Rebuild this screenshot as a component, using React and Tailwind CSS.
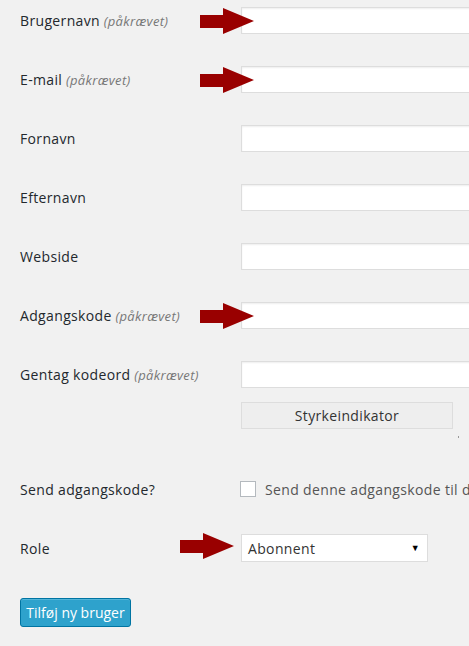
import React, { useState } from "react";

// Red pointer arrow drawn over the form
const Arrow = ({ className }) => (
  <svg
    className={className}
    width="54"
    height="26"
    viewBox="0 0 54 26"
    aria-hidden="true"
  >
    <path d="M0 7H23V0L54 13L23 26V20H0Z" fill="#990000" />
  </svg>
);

const Field = ({ label, required, arrow, type = "text" }) => (
  <div className="relative flex items-center h-[27px] mb-[32px]">
    <label className="w-[221px] shrink-0 text-[14px] text-[#23282d]">
      {label}
      {required && (
        <span className="italic text-[13px] text-[#777]"> (påkrævet)</span>
      )}
    </label>
    <input
      type={type}
      className="w-[350px] h-[27px] shrink-0 bg-white border border-[#ddd] shadow-[inset_0_1px_2px_rgba(0,0,0,0.07)] outline-none px-2 text-[14px]"
    />
    {arrow && <Arrow className="absolute left-[180px] top-[1px]" />}
  </div>
);

export default function App() {
  const [send, setSend] = useState(false);

  return (
    <div
      className="w-[469px] h-[646px] overflow-hidden bg-[#f1f1f1] pl-[20px] pt-[7px] tracking-[0.35px]"
      style={{ fontFamily: '"Open Sans", "Noto Sans", sans-serif' }}
    >
      <Field label="Brugernavn" required arrow />
      <Field label="E-mail" required arrow />
      <Field label="Fornavn" />
      <Field label="Efternavn" />
      <Field label="Webside" />
      <Field label="Adgangskode" required arrow type="password" />

      {/* Repeat password + strength meter */}
      <div className="relative flex items-center h-[27px]">
        <label className="w-[221px] shrink-0 text-[14px] text-[#23282d]">
          Gentag kodeord
          <span className="italic text-[13px] text-[#777]"> (påkrævet)</span>
        </label>
        <input
          type="password"
          className="w-[350px] h-[27px] shrink-0 bg-white border border-[#ddd] shadow-[inset_0_1px_2px_rgba(0,0,0,0.07)] outline-none px-2"
        />
      </div>
      <div className="flex items-end ml-[221px] mt-[14px]">
        <div className="w-[212px] h-[27px] bg-[#eee] border border-[#ddd] flex items-center justify-center text-[14px] text-[#333]">
          Styrkeindikator
        </div>
        <span className="w-[1px] h-[2px] bg-[#999] ml-[5px] -mb-[9px]"></span>
      </div>

      {/* Send password */}
      <div className="flex items-center h-[16px] mt-[52px]">
        <span className="w-[220px] shrink-0 text-[14px] text-[#23282d]">
          Send adgangskode?
        </span>
        <label className="flex items-center whitespace-nowrap text-[14px] text-[#555]">
          <span
            onClick={() => setSend(!send)}
            className="w-[16px] h-[16px] bg-white border border-[#b4b9be] shrink-0 mr-[9px]"
          ></span>
          Send denne adgangskode til den nye bruger via e-mail.
        </label>
      </div>

      {/* Role */}
      <div className="relative flex items-center h-[28px] mt-[37px]">
        <span className="w-[221px] shrink-0 text-[14px] text-[#23282d]">
          Role
        </span>
        <div className="w-[187px] h-[28px] bg-white border border-[#ddd] flex items-center justify-between pl-[6px] pr-[7px] text-[14px] text-[#333]">
          <span>Abonnent</span>
          <span className="text-[9px] text-black">▼</span>
        </div>
        <Arrow className="absolute left-[160px] top-[-1px]" />
      </div>

      {/* Submit */}
      <button className="mt-[36px] w-[111px] h-[29px] bg-[#2ea2cc] border border-[#0074a2] rounded-[3px] shadow-[inset_0_1px_0_rgba(120,200,230,0.5)] text-white text-[14px] tracking-normal flex items-center justify-center">
        Tilføj ny bruger
      </button>
    </div>
  );
}
